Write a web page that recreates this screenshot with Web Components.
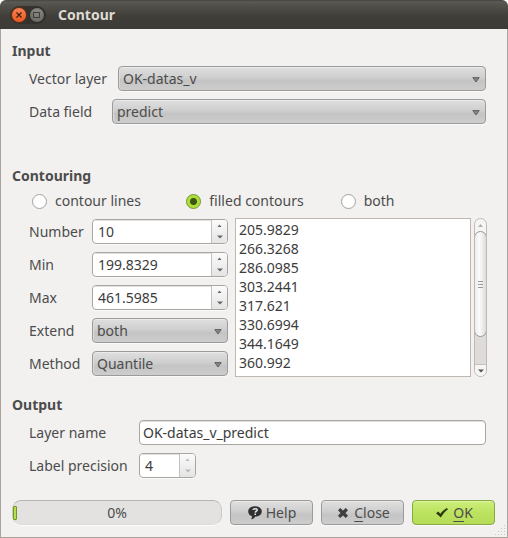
<!DOCTYPE html>
<html lang="en">
<head>
<meta charset="utf-8">
<title>Contour</title>
<style>
  html { height: 100%; background: #fff; }
  body {
    margin: 0; min-height: 100%; display: flex;
    font: 14px/20px "Noto Sans", sans-serif; color: #4c4c4c;
  }
  dialog-window { flex: 1; }
  .inputs { --label: 89px; }
  .inputs .field { --label: 83px; }
  .inputs { margin-bottom: 42px; }
  .contouring { margin-bottom: 19px; }
  .output { --label: 110px; margin-bottom: 22px; }
  .split { display: flex; gap: 7px; padding-right: 8px; }
  .params { --label: 63px; --inset: 0px; width: 216px; flex: none; display: flex; flex-direction: column; gap: 8px; }
  level-list { flex: 1; }
  .footer { display: flex; gap: 8px; }
  progress-meter { flex: 1; }
</style>
</head>
<body>
<dialog-window heading="Contour">
  <group-box class="inputs" heading="Input">
    <combo-field label="Vector layer" value="OK-datas_v"></combo-field>
    <combo-field class="field" label="Data field" value="predict"></combo-field>
  </group-box>
  <group-box class="contouring" heading="Contouring">
    <radio-group name="Contour type" options="contour lines|filled contours|both" selected="1"></radio-group>
    <div class="split">
      <div class="params">
        <spin-field label="Number" value="10"></spin-field>
        <spin-field label="Min" value="199.8329"></spin-field>
        <spin-field label="Max" value="461.5985"></spin-field>
        <combo-field label="Extend" value="both"></combo-field>
        <combo-field label="Method" value="Quantile"></combo-field>
      </div>
      <level-list values="205.9829 266.3268 286.0985 303.2441 317.621 330.6994 344.1649 360.992"></level-list>
    </div>
  </group-box>
  <group-box class="output" heading="Output">
    <text-field label="Layer name" value="OK-datas_v_predict"></text-field>
    <spin-field compact label="Label precision" value="4"></spin-field>
  </group-box>
  <div class="footer">
    <progress-meter value="0"></progress-meter>
    <push-button>
      <svg slot="icon" width="16" height="16" viewBox="0 0 16 16"><path d="M8 1.300c4 0 6.800 2.100 6.800 5.100 0 3.100-2.900 5.200-6.600 5.200-.4 1.400-1.900 2.500-4.300 2.700 1-.9 1.300-1.900 1.100-3.100C2.700 10.400 1.200 8.700 1.200 6.400c0-3 2.800-5.100 6.800-5.100z" fill="#303030"/><path d="M5.900 4.800c.3-1.500 4.300-1.700 4.300.2 0 1.300-1.900 1.200-2 2.600" fill="none" stroke="#e4e4e4" stroke-width="1.500"/><path d="M7.400 8.600h1.600v1.500H7.400z" fill="#e4e4e4"/></svg>Help</push-button>
    <push-button>
      <svg slot="icon" width="16" height="16" viewBox="0 0 16 16"><path d="M3 5.200 5.200 3 8 5.500 10.800 3 13 5.200 10.500 8 13 10.800 10.800 13 8 10.500 5.200 13 3 10.800 5.500 8z" fill="#404040"/></svg><u>C</u>lose</push-button>
    <push-button accent>
      <svg slot="icon" width="16" height="16" viewBox="0 0 16 16"><path d="M2 8.200 4.300 6.500 6.300 8.700C8.200 6.300 10.300 4.500 12.800 3L14 4.300C11 6.700 8.800 9.300 6.800 12.500z" fill="#2c3a10"/></svg><u>O</u>K</push-button>
  </div>
</dialog-window>

<script>
const define = (name, css, render) => customElements.define(name, class extends HTMLElement {
  connectedCallback() {
    if (this.shadowRoot) return;
    this.attachShadow({ mode: "open" }).innerHTML =
      `<style>*{box-sizing:border-box}:host{box-sizing:border-box}${css}</style>${render(this)}`;
  }
});
const attr = (el, name) => el.getAttribute(name) || "";

const rowCss = `
  :host { display: flex; align-items: center; height: 25px; padding-left: 17px; padding-right: var(--inset, 9px); }
  label { width: var(--label); flex: none; white-space: nowrap; }
  input, select, button { font: inherit; margin: 0; outline: 0; }
`;
const buttonFace = `linear-gradient(#dfdfdf, #cfcfcf 45%, #c4c4c4 60%, #cdcdcd)`;

define("dialog-window", `
  :host { display: flex; flex-direction: column; background: #f2f1f0; border: 1px solid #aaa69f; border-top: 0; border-radius: 7px 7px 0 0; position: relative; }
  header { display: flex; align-items: center; height: 29px; margin: 0 -1px; padding-left: 10px; gap: 12px;
    background: linear-gradient(#46443f 0, #5c5a54 2px, #55534d 4px, #3f3e39 16px, #3c3b37); border-radius: 6px 6px 0 0; }
  .tray { display: flex; gap: 2px; padding: 1px; border-radius: 10px; background: #34332f; }
  .tray button { width: 16px; height: 16px; padding: 0; border: 1px solid #2e2d2a; border-radius: 50%; background: radial-gradient(circle at 50% 25%, #8b8982, #65635d); display: flex; align-items: center; justify-content: center; }
  .tray button.close { background: linear-gradient(#f78055, #ea5a22); border-color: #6e2d13; }
  h1 { margin: 0; font: inherit; font-weight: bold; color: #dfdbd2; }
  main { flex: 1; display: flex; flex-direction: column; padding: 12px 12px 12px 11px; }
  .grip { position: absolute; right: 1px; bottom: 1px; }
`, el => `
  <header>
    <div class="tray">
      <button class="close" aria-label="Close window"><svg width="8" height="8" viewBox="0 0 8 8"><path d="M1.500 1.500l5 5m0-5l-5 5" stroke="#401c0d" stroke-width="1.200"/></svg></button>
      <button aria-label="Maximize"><svg width="8" height="8" viewBox="0 0 8 8"><path d="M.5 1.500h6v5h-6z" fill="none" stroke="#3c3b37"/></svg></button>
    </div>
    <h1>${attr(el, "heading")}</h1>
  </header>
  <main><slot></slot></main>
  <svg class="grip" width="11" height="11" viewBox="0 0 11 11"><path d="M9 0h1v1H9zM6 3h1v1H6zM9 3h1v1H9zM3 6h1v1H3zM6 6h1v1H6zM9 6h1v1H9zM0 9h1v1H0zM3 9h1v1H3zM6 9h1v1H6zM9 9h1v1H9z" fill="#c9c7c4"/></svg>
`);

define("group-box", `
  :host { display: block; }
  h2 { margin: 0 0 5px; font: inherit; font-weight: bold; }
  .rows { display: flex; flex-direction: column; gap: 8px; }
`, el => `<section><h2>${attr(el, "heading")}</h2><div class="rows"><slot></slot></div></section>`);

define("combo-field", rowCss + `
  .box { flex: 1; min-width: 0; display: grid; align-items: center; }
  .box > * { grid-area: 1 / 1; }
  select { appearance: none; width: 100%; height: 25px; padding: 0 20px 0 4px; color: inherit;
    border: 1px solid #9b9b9b; border-radius: 4px; background: ${buttonFace}; box-shadow: inset 0 1px #eaeaea, inset 1px 0 #dadada, 0 1px #fafafa; }
  svg { justify-self: end; margin-right: 6px; margin-top: 3px; pointer-events: none; }
`, el => `
  <label for="c">${attr(el, "label")}</label>
  <div class="box"><select id="c"><option>${attr(el, "value")}</option></select>
  <svg width="8" height="6" viewBox="0 0 8 6"><path d="M.8.600h6.400L4 5z" fill="#858585" stroke="#626262"/></svg></div>
`);

define("text-field", rowCss + `
  input { flex: 1; min-width: 0; height: 25px; padding: 0 3px; color: #3c3c3c; background: #fff; border: 1px solid #a9a6a2; border-radius: 4px; box-shadow: inset 0 1px #e2e0de; }
`, el => `<label for="t">${attr(el, "label")}</label><input id="t" type="text" value="${attr(el, "value")}">`);

define("spin-field", rowCss + `
  .box { flex: 1; min-width: 0; display: flex; height: 25px; border: 1px solid #a9a6a2; border-radius: 4px; background: #fff; overflow: hidden; box-shadow: 0 1px #fafafa; }
  :host([compact]) .box { flex: none; width: 57px; }
  input { flex: 1; min-width: 0; padding: 0 5px; border: 0; background: none; color: #3c3c3c; appearance: textfield; box-shadow: inset 0 1px #e2e0de; }
  input::-webkit-inner-spin-button { appearance: none; }
  .steps { width: 16px; display: flex; flex-direction: column; border-left: 1px solid #c4c1be; background: linear-gradient(#fbfbfb, #e4e4e4); }
  button { flex: 1; padding: 0; border: 0; background: none; display: flex; align-items: center; justify-content: center; color: #666; }
  :host([compact]) button { color: #b9b9b9; }
`, el => `
  <label for="s">${attr(el, "label")}</label>
  <div class="box"><input id="s" type="number" step="any" value="${attr(el, "value")}">
    <div class="steps">
      <button aria-label="Increase"><svg width="5" height="3" viewBox="0 0 5 3"><path d="M.5 3 2.500.500 4.500 3z" fill="currentColor"/></svg></button>
      <button aria-label="Decrease"><svg width="6" height="4" viewBox="0 0 6 4"><path d="M0 .5h6L3 3.500z" fill="currentColor"/></svg></button>
    </div>
  </div>
`);

define("radio-group", `
  :host { display: block; padding-left: 20px; }
  fieldset { margin: 0; padding: 0; border: 0; min-width: 0; display: grid; grid-template-columns: repeat(3, 1fr); }
  label { display: flex; align-items: center; gap: 8px; white-space: nowrap; }
  input { appearance: none; width: 15px; height: 15px; margin: 0; border: 1px solid #a3a19e; border-radius: 50%; background: #fff; }
  input:checked { border-color: #6f9325; background: radial-gradient(circle, #3c5510 0 3px, #a9dc38 4px, #b9e650); }
`, el => `<fieldset aria-label="${attr(el, "name")}">${attr(el, "options").split("|").map((text, i) =>
  `<label><input type="radio" name="r"${i === +attr(el, "selected") ? " checked" : ""}>${text}</label>`).join("")}</fieldset>`);

define("level-list", `
  :host { display: flex; gap: 3px; margin: -1px 0; min-width: 0; color: #3c3c3c; }
  ul { flex: 1; min-width: 0; margin: 0; padding: 1px 3px; list-style: none; line-height: 19px; background: #fff; border: 1px solid #bfb8b1; overflow: hidden; }
  .bar { width: 13px; display: flex; flex-direction: column; border: 1px solid #bcb9b6; border-radius: 7px; background: #dedbd8; overflow: hidden; }
  button { height: 12px; padding: 0; border: 0; background: #f5f5f4; display: flex; align-items: center; justify-content: center; color: #b0b0b0; }
  button:last-child { color: #555; border-top: 1px solid #c5c2bf; }
  .track { flex: 1; display: flex; flex-direction: column; background: linear-gradient(#f5f5f4 50%, #dedbd8 50%); }
  .thumb { height: 80%; margin: 0 -1px; border: 1px solid #999; border-radius: 7px; background: linear-gradient(90deg, #ececec, #fbfbfb 40%, #dcdcdc); display: flex; align-items: center; justify-content: center; }
`, el => `
  <ul role="listbox" aria-label="Contour levels">${attr(el, "values").split(" ").map(v => `<li role="option">${v}</li>`).join("")}</ul>
  <div class="bar">
    <button aria-label="Scroll up"><svg width="5" height="3" viewBox="0 0 5 3"><path d="M0 3 2.500 0 5 3z" fill="currentColor"/></svg></button>
    <div class="track"><div class="thumb"><svg width="5" height="7" viewBox="0 0 5 7"><path d="M0 .5h5M0 3.500h5M0 6.500h5" stroke="#999"/></svg></div></div>
    <button aria-label="Scroll down"><svg width="6" height="4" viewBox="0 0 6 4"><path d="M0 .5h6L3 3.500z" fill="currentColor"/></svg></button>
  </div>
`);

define("progress-meter", `
  :host { display: block; }
  .track { position: relative; height: 25px; line-height: 24px; text-align: center; border: 1px solid #c9c7c5; border-color: #b5b3b1 #cccac8 #dedcda; border-radius: 9px; background: #e3e2e1; box-shadow: 0 1px #fcfcfc; }
  .fill { position: absolute; left: 0; top: 5px; width: 4px; height: 14px; border: 1px solid #73981f; border-radius: 1px; background: #b4e050; }
`, el => `<div class="track" role="progressbar" aria-label="Progress" aria-valuenow="${attr(el, "value")}"><span class="fill"></span>${attr(el, "value")}%</div>`);

define("push-button", `
  :host { display: block; width: 83px; }
  button { font: inherit; color: inherit; width: 100%; height: 25px; margin: 0; padding: 0; display: flex; align-items: center; justify-content: center; gap: 3px;
    border: 1px solid #9b9b9b; border-radius: 4px; background: ${buttonFace}; box-shadow: inset 0 1px #eaeaea, 0 1px #fafafa; }
  :host([accent]) button { border-color: #86a845; background: linear-gradient(#cdee7c, #bce35f 50%, #b6dc58); box-shadow: inset 0 1px #dcf59b, 0 1px #fafafa; }
  ::slotted(u) { text-underline-offset: 3px; text-decoration-skip-ink: none; }
`, () => `<button type="button"><slot name="icon"></slot><span><slot></slot></span></button>`);
</script>
</body>
</html>
